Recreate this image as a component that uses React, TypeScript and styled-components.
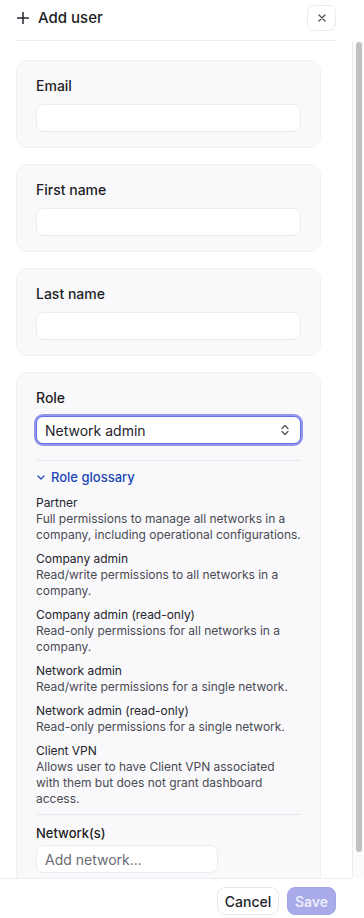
import styled, { createGlobalStyle } from "styled-components";

const GlobalStyle = createGlobalStyle`
  html, body {
    margin: 0;
    padding: 0;
    background: #ffffff;
  }
  body {
    font-family: Inter, "Noto Sans", sans-serif;
    color: #1d1d24;
    -webkit-font-smoothing: antialiased;
  }
  * {
    box-sizing: border-box;
  }
`;

const roles = [
  {
    name: "Partner",
    text: "Full permissions to manage all networks in a company, including operational configurations.",
  },
  {
    name: "Company admin",
    text: "Read/write permissions to all networks in a company.",
  },
  {
    name: "Company admin (read-only)",
    text: "Read-only permissions for all networks in a company.",
  },
  {
    name: "Network admin",
    text: "Read/write permissions for a single network.",
  },
  {
    name: "Network admin (read-only)",
    text: "Read-only permissions for a single network.",
  },
  {
    name: "Client VPN",
    text: "Allows user to have Client VPN associated with them but does not grant dashboard access.",
  },
];

const App = () => {
  return (
    <Panel>
      <GlobalStyle />
      <Header>
        <Title>
          <svg width="12" height="12" viewBox="0 0 12 12">
            <path
              d="M6 0.5v11M0.5 6h11"
              stroke="#24242c"
              strokeWidth="1.5"
              strokeLinecap="round"
            />
          </svg>
          Add user
        </Title>
        <CloseButton aria-label="Close">
          <svg width="8" height="8" viewBox="0 0 8 8">
            <path
              d="M1 1l6 6M7 1l-6 6"
              stroke="#50505a"
              strokeWidth="1.4"
              strokeLinecap="round"
            />
          </svg>
        </CloseButton>
      </Header>

      <Body>
        <Content>
          <Card>
            <Label>Email</Label>
            <TextInput />
          </Card>
          <Card>
            <Label>First name</Label>
            <TextInput />
          </Card>
          <Card>
            <Label>Last name</Label>
            <TextInput />
          </Card>
          <Card>
            <Label>Role</Label>
            <Select>
              <span>Network admin</span>
              <svg width="8" height="12" viewBox="0 0 8 12">
                <path
                  d="M1 4.5L4 1.5l3 3M1 7.5l3 3 3-3"
                  stroke="#4e4e58"
                  strokeWidth="1.2"
                  fill="none"
                  strokeLinecap="round"
                  strokeLinejoin="round"
                />
              </svg>
            </Select>
            <Divider $top={16} $bottom={7} />
            <GlossaryToggle>
              <svg width="8" height="5" viewBox="0 0 8 5">
                <path
                  d="M1 1l3 3 3-3"
                  stroke="#2147b5"
                  strokeWidth="1.2"
                  fill="none"
                  strokeLinecap="round"
                  strokeLinejoin="round"
                />
              </svg>
              Role glossary
            </GlossaryToggle>
            <Glossary>
              {roles.map((r) => (
                <RoleItem key={r.name}>
                  <RoleName>{r.name}</RoleName>
                  <RoleText>{r.text}</RoleText>
                </RoleItem>
              ))}
            </Glossary>
            <Divider $top={7} $bottom={8} />
            <SmallLabel>Network(s)</SmallLabel>
            <NetworkInput placeholder="Add network..." />
          </Card>
        </Content>
        <ScrollTrack>
          <ScrollThumb />
        </ScrollTrack>
      </Body>

      <Footer>
        <CancelButton>Cancel</CancelButton>
        <SaveButton disabled>Save</SaveButton>
      </Footer>
    </Panel>
  );
};

export default App;

const Panel = styled.div`
  display: flex;
  flex-direction: column;
  width: 364px;
  height: 100vh;
  overflow: hidden;
  background: #ffffff;
`;

const Header = styled.div`
  display: flex;
  align-items: center;
  justify-content: space-between;
  flex: 0 0 41px;
  width: 320px;
  margin: 0 16px;
  padding-bottom: 5px;
  border-bottom: 1px solid #ececf0;
`;

const Title = styled.div`
  display: flex;
  align-items: center;
  gap: 9px;
  padding-left: 1px;
  font-size: 15px;
  font-weight: 500;
  color: #1c1c23;
`;

const CloseButton = styled.button`
  display: flex;
  align-items: center;
  justify-content: center;
  width: 29px;
  height: 26px;
  padding: 0;
  background: #ffffff;
  border: 1px solid #ebebef;
  border-radius: 7px;
  cursor: pointer;
`;

const Body = styled.div`
  flex: 1;
  min-height: 0;
  display: flex;
`;

const Content = styled.div`
  flex: 1;
  min-width: 0;
  overflow: hidden;
  padding: 19px 31px 16px 16px;
  display: flex;
  flex-direction: column;
  gap: 16px;
`;

const ScrollTrack = styled.div`
  flex: 0 0 12px;
  padding: 1px 2px 0 3px;
  background: #fbfbfb;
  border-left: 1px solid #ececec;
`;

const ScrollThumb = styled.div`
  height: 810px;
  background: #c1c1c1;
  border-radius: 3px;
`;

const Card = styled.div`
  flex-shrink: 0;
  display: flex;
  flex-direction: column;
  padding: 15px 19px;
  background: #f9f9fb;
  border: 1px solid #f0f0f3;
  border-radius: 12px;
`;

const Label = styled.label`
  font-size: 14px;
  font-weight: 500;
  line-height: 20px;
  color: #1d1d24;
  margin-bottom: 8px;
`;

const SmallLabel = styled.label`
  font-size: 13px;
  font-weight: 500;
  line-height: 20px;
  color: #1d1d24;
  margin-bottom: 2px;
`;

const TextInput = styled.input`
  height: 28px;
  width: 100%;
  padding: 0 8px;
  font-family: inherit;
  font-size: 14px;
  background: #ffffff;
  border: 1px solid #ececf0;
  border-radius: 7px;
  outline: none;
`;

const NetworkInput = styled(TextInput)`
  width: 182px;
  &::placeholder {
    color: #6b6b75;
  }
`;

const Select = styled.div`
  display: flex;
  align-items: center;
  justify-content: space-between;
  height: 28px;
  padding: 0 11px 0 8px;
  font-size: 14px;
  color: #24242c;
  background: #ffffff;
  border: 1px solid #6a6ee6;
  border-radius: 7px;
  box-shadow: 0 0 0 2px rgba(112, 116, 232, 0.75);
`;

const Divider = styled.div<{ $top: number; $bottom: number }>`
  height: 1px;
  background: #e9e9ed;
  margin: ${(p) => p.$top}px 0 ${(p) => p.$bottom}px;
`;

const GlossaryToggle = styled.button`
  display: flex;
  align-items: center;
  gap: 6px;
  height: 18px;
  padding: 0 0 0 1px;
  font-family: inherit;
  font-size: 13px;
  font-weight: 500;
  color: #2147b5;
  background: none;
  border: none;
  cursor: pointer;
  align-self: flex-start;
`;

const Glossary = styled.div`
  display: flex;
  flex-direction: column;
  gap: 8px;
  margin-top: 9px;
`;

const RoleItem = styled.div`
  display: flex;
  flex-direction: column;
  font-size: 12px;
  line-height: 16px;
  letter-spacing: -0.02px;
`;

const RoleName = styled.div`
  color: #24242b;
  font-weight: 400;
`;

const RoleText = styled.div`
  color: #4a4a53;
`;

const Footer = styled.div`
  flex: 0 0 40px;
  display: flex;
  justify-content: flex-end;
  align-items: flex-start;
  gap: 8px;
  width: 352px;
  padding: 8px 16px 0;
  border-top: 1px solid #ececf0;
`;

const ButtonBase = styled.button`
  height: 28px;
  font-family: inherit;
  font-size: 14px;
  font-weight: 500;
  border-radius: 8px;
  cursor: pointer;
`;

const CancelButton = styled(ButtonBase)`
  width: 62px;
  color: #24242c;
  background: #ffffff;
  border: 1px solid #e8e8ed;
`;

const SaveButton = styled(ButtonBase)`
  width: 49px;
  color: #ebecfb;
  font-weight: 600;
  background: #a9abe8;
  border: 1px solid #a2a5e4;
  cursor: default;
`;
